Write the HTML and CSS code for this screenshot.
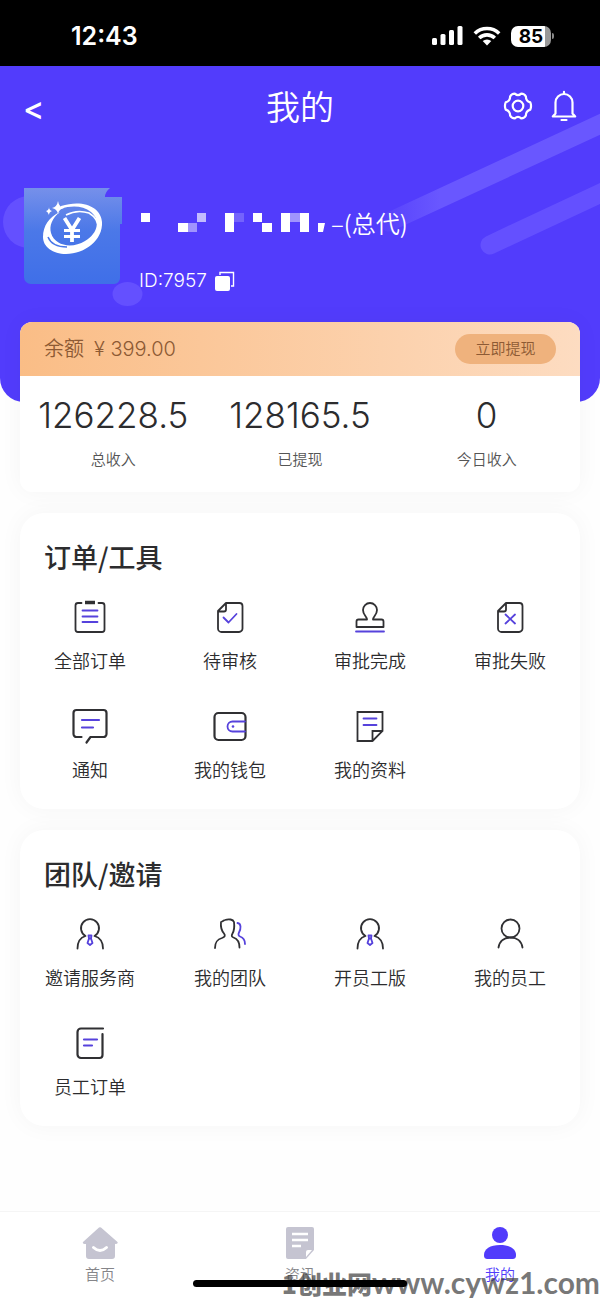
FILE: index.html
```
<!DOCTYPE html>
<html lang="zh-CN">
<head>
<meta charset="utf-8">
<meta name="viewport" content="width=device-width, initial-scale=1">
<title>我的</title>
<link rel="stylesheet" href="styles.css">
</head>
<body>
<div class="app">
  <div class="status">
    <span class="clock">12:43</span>
    <div class="signals">
      <svg width="31" height="20" viewBox="0 0 31 20" fill="#fff"><rect x="0" y="12" width="5" height="7" rx="1.5"/><rect x="8.500" y="8" width="5" height="11" rx="1.500"/><rect x="17" y="4" width="5" height="15" rx="1.500"/><rect x="25.500" y="0" width="5" height="19" rx="1.500"/></svg>
      <svg width="28" height="20" viewBox="0 0 28 20" fill="none" stroke="#fff" stroke-width="3.600"><path d="M1.800 7.500a17.500 17.500 0 0 1 24.400 0"/><path d="M6.200 12a11.300 11.300 0 0 1 15.600 0"/><path d="M14 19.500l-4.300-4.400a6.300 6.300 0 0 1 8.600 0z" fill="#fff" stroke="none"/></svg>
      <div class="battery"><span class="battery-level">85</span><span class="battery-tip"></span></div>
    </div>
  </div>

  <header class="hero">
    <svg class="hero-art" viewBox="0 0 600 336" preserveAspectRatio="xMaxYMin slice" aria-hidden="true">
      <defs><linearGradient id="beam" gradientUnits="userSpaceOnUse" x1="380" y1="0" x2="440" y2="0"><stop stop-color="#5641fc"/><stop offset="1" stop-color="#6957ff"/></linearGradient></defs>
      <g fill="none" stroke-width="19" stroke-linecap="round"><path stroke="url(#beam)" d="M389 156L620 49"/><path stroke="#6450ff" d="M490 179L620 118"/></g>
      <ellipse cx="29" cy="156" rx="26" ry="26" fill="#6450ff"/><ellipse cx="127.500" cy="228" rx="15" ry="12" fill="#6450ff"/>
    </svg>
    <nav class="nav">
      <button class="nav-back" type="button" aria-label="返回">&lt;</button>
      <h1 class="nav-title">我的</h1>
      <div class="nav-actions">
        <button class="icon-button" type="button" aria-label="设置"><svg width="30" height="32" viewBox="0 0 30 32" fill="none" stroke="#fff" stroke-width="2.200" stroke-linejoin="round"><path d="M11.800 3.600Q15 6.600 18.200 3.600Q21.500 3.700 22.900 6.500Q22.800 11 27.300 12.400Q28.800 16 27.300 19.600Q22.800 21 22.900 25.500Q21.500 28.300 18.200 28.400Q15 25.400 11.800 28.400Q8.500 28.300 7.100 25.500Q7.200 21 2.700 19.600Q1.200 16 2.700 12.400Q7.200 11 7.100 6.500Q8.500 3.700 11.800 3.600Z"/><circle cx="15" cy="16" r="5.300"/></svg></button>
        <button class="icon-button" type="button" aria-label="消息"><svg width="26" height="32" viewBox="0 0 26 32" fill="none" stroke="#fff" stroke-width="2.200" stroke-linecap="round" stroke-linejoin="round"><path d="M13 1.800V3.500M4.500 23.500V12.500a8.500 8.500 0 0 1 17 0v11l2.700 3H1.800zM10.500 30h5"/></svg></button>
      </div>
    </nav>
    <div class="profile">
      <svg class="avatar" width="98" height="98" viewBox="0 0 98 98" role="img" aria-label="头像">
        <defs><linearGradient id="sky" x2="0" y2="1"><stop stop-color="#7690ea"/><stop offset=".45" stop-color="#4b78e8"/><stop offset="1" stop-color="#3f6fe8"/></linearGradient></defs>
        <path d="M0 1H86Q81 5 81 10H98V37H96V91a6 6 0 0 1-6 6H7a7 7 0 0 1-7-7z" fill="url(#sky)"/>
        <path fill="#fff" fill-rule="evenodd" d="M37 19C59 12 77 20 78 35C79 53 61 67 42 67C29 67 19 60 19 50C19 39 25 30 36 25C28 31 25 39 27 46C31 59 48 62 61 54C75 46 76 32 67 25C59 19 48 18 37 22z"/>
        <path d="M42 28Q53 22 65 26Q75 32 74 42" fill="none" stroke="#fff" stroke-width="1.500"/>
        <path d="M24 50Q28 60 43 60" fill="none" stroke="#4b78e8" stroke-width="1.500"/>
        <path d="M40.500 31l7.500 12 7.500-12M48 42v13" fill="none" stroke="#fff" stroke-width="3.800"/>
        <path d="M40 43.500h16M40 49.500h16" fill="none" stroke="#fff" stroke-width="2.800"/>
        <path d="M34 14q1 6 6 7-5 1-6 6-1-5-6-6 5-1 6-7zM25 20q0 3 3 4-3 1-3 4-1-3-3-4 3-1 3-4z" fill="#fff"/>
      </svg>
      <div class="profile-text">
        <p class="name">
          <svg width="186" height="20" viewBox="0 0 186 20" fill="#fff" aria-hidden="true"><path d="M2 0h9v9H2zM39 10h10v9H39zM86 0h9v19h-9zM114 0h9v9h-9zM123 10h10v9h-10zM142 0h9v19h-9zM161 0h9v19h-9zM179 10h7l-2 9h-5z"/><path d="M49 10h9v9h-9zM151 0h10v9h-10z" opacity=".45"/><path d="M58 0h9v9h-9z" opacity=".65"/><path d="M95 0h10v9H95z" opacity=".2"/></svg>
          <span>–(总代)</span>
        </p>
        <p class="uid">ID:7957
          <button class="icon-button" type="button" aria-label="复制"><svg width="20" height="20" viewBox="0 0 20 20"><path d="M5 4V1.500H18.500V15H16" fill="none" stroke="#fff" stroke-width="1.400"/><rect x="0" y="5" width="15" height="15" rx="2" fill="#fff"/></svg></button>
        </p>
      </div>
    </div>
  </header>

  <main class="content">
    <section class="card">
      <div class="balance"><p class="balance-text"><span>余额</span><span class="amount">¥ 399.00</span></p><button class="withdraw" type="button">立即提现</button></div>
      <dl class="stats">
        <div class="stat"><dd>126228.5</dd><dt>总收入</dt></div>
        <div class="stat"><dd>128165.5</dd><dt>已提现</dt></div>
        <div class="stat"><dd>0</dd><dt>今日收入</dt></div>
      </dl>
    </section>

    <section class="card panel">
      <h2 class="panel-title">订单/工具</h2>
      <div class="grid">
        <a class="item" href="#"><svg class="icon" viewBox="0 0 40 40"><path d="M11.500 6H8a2.500 2.500 0 0 0-2.500 2.500v24A2.500 2.500 0 0 0 8 35h24a2.500 2.500 0 0 0 2.500-2.500v-24A2.500 2.500 0 0 0 32 6h-3.500"/><path d="M15 5.500h10" stroke-width="3.500" stroke-linecap="butt"/><path class="accent" d="M12.500 13.500h15M12.500 19.500h15M12.500 25h15"/></svg>全部订单</a>
        <a class="item" href="#"><svg class="icon" viewBox="0 0 40 40"><path d="M16 6h13.500a3 3 0 0 1 3 3v22.500a3.500 3.500 0 0 1-3.500 3.500H11.500A3.500 3.500 0 0 1 8 31.500V14zM16 6v6.500a2 2 0 0 1-2 2H8"/><path class="accent" d="M13.500 20.500l5 5 8-8.500"/></svg>待审核</a>
        <a class="item" href="#"><svg class="icon" viewBox="0 0 40 40"><path d="M17 22.500c0-3-4-4.500-4-9.500a7 7 0 0 1 14 0c0 5-4 6.500-4 9.500h8.500a2 2 0 0 1 2 2V30h-27v-5.500a2 2 0 0 1 2-2z"/><path class="accent" d="M6 34.500h28"/></svg>审批完成</a>
        <a class="item" href="#"><svg class="icon" viewBox="0 0 40 40"><path d="M16 6h13.500a3 3 0 0 1 3 3v22.500a3.500 3.500 0 0 1-3.500 3.500H11.500A3.500 3.500 0 0 1 8 31.500V14zM16 6v6.500a2 2 0 0 1-2 2H8"/><path class="accent" d="M15.500 17.500l9.500 9M25 17.500l-9.500 9"/></svg>审批失败</a>
        <a class="item" href="#"><svg class="icon" viewBox="0 0 40 40"><path stroke-width="2.200" d="M11.500 31H6.500a3 3 0 0 1-3-3V7a3 3 0 0 1 3-3h27a3 3 0 0 1 3 3v21a3 3 0 0 1-3 3H20.500l-4 5.500"/><path class="accent" stroke-width="2.200" d="M12 14h17M12 21.500h11"/></svg>通知</a>
        <a class="item" href="#"><svg class="icon" viewBox="0 0 40 40"><rect stroke-width="2.200" x="4.500" y="7" width="31" height="27" rx="4"/><path class="accent" d="M35 15.500H22.500a5 5 0 0 0 0 10H35"/><circle cx="23" cy="20.500" r="1.300" fill="#5642dc" stroke="none"/></svg>我的钱包</a>
        <a class="item" href="#"><svg class="icon" viewBox="0 0 40 40"><path stroke-linejoin="miter" d="M7.500 6H32.500V25L22.500 35h-15zM32.500 25H22.500V35"/><path class="accent" d="M13.500 12.500h13M13.500 19h13"/></svg>我的资料</a>
      </div>
    </section>

    <section class="card panel">
      <h2 class="panel-title">团队/邀请</h2>
      <div class="grid">
        <a class="item" href="#"><svg class="icon" viewBox="0 0 40 40"><path d="M7.500 34.500c0-6.500 3-11 8-12.500a9 9 0 1 1 9 0c5 1.500 8.500 6 8.500 12.500"/><path class="accent" d="M18.500 21.500h3l-.5 3 1.500 4.500-2.500 2-2.500-2 1.500-4.500zM19 24.500h2"/></svg>邀请服务商</a>
        <a class="item" href="#"><svg class="icon" viewBox="0 0 40 40"><path d="M5 34c0-6 2-8.500 7-10 3-1 3.500-2.500 2-4.500-2.500-3-3.500-7-3-11.500 2-.5 2.500-1.500 4-2 4-1.500 8-.5 9 2 .500 4 .500 8-1.500 11.500-1.500 2.500-.5 3.500 1 4 4.500 1.500 6 4.500 6 10"/><path class="accent" d="M27.500 9c4 .5 3.500 6 1.500 9.500-1 2-.5 3.500 1 4 3 1 5 3.500 5 7.500"/></svg>我的团队</a>
        <a class="item" href="#"><svg class="icon" viewBox="0 0 40 40"><path d="M7.500 34.500c0-6.500 3-11 8-12.500a9 9 0 1 1 9 0c5 1.500 8.500 6 8.500 12.500"/><path class="accent" d="M18.500 21.500h3l-.5 3 1.500 4.500-2.500 2-2.500-2 1.500-4.500zM19 24.500h2"/></svg>开员工版</a>
        <a class="item" href="#"><svg class="icon" viewBox="0 0 40 40"><circle cx="20.500" cy="14.500" r="9"/><path d="M8.500 33.500c1-6.500 6-10 12-10s11 3.500 12 10"/></svg>我的员工</a>
        <a class="item" href="#"><svg class="icon" viewBox="0 0 40 40"><path d="M33 5.500H11A3.500 3.500 0 0 0 7.500 9v22.500A3.500 3.500 0 0 0 11 35h18.500a3 3 0 0 0 3-3V11" stroke-width="2.200"/><path class="accent" stroke-width="2.200" d="M14 16.500h13M14 22.500h8"/></svg>员工订单</a>
      </div>
    </section>
  </main>

  <footer class="tabbar">
    <a class="tab" href="#"><svg width="36" height="32" viewBox="0 0 36 32"><path d="M17 .5a2 2 0 0 1 2 0L35.500 15q1 2-2.500 2v12a3 3 0 0 1-3 3H7a3 3 0 0 1-3-3V17q-4 0-3-2z" fill="#c5c4d1"/><path d="M11.500 20.500q6.500 6 13 0" fill="none" stroke="#fff" stroke-width="3" stroke-linecap="round"/></svg>首页</a>
    <a class="tab" href="#"><svg width="36" height="32" viewBox="0 0 36 32"><path d="M6 0h24a2 2 0 0 1 2 2v21l-8 9H6a2 2 0 0 1-2-2V2a2 2 0 0 1 2-2z" fill="#c5c4d1"/><path d="M10 7h16M10 13h16M10 19h9" stroke="#fff" stroke-width="2.500"/><path d="M24 30v-5q0-2 2-2h4z" fill="#fff"/></svg>资讯</a>
    <a class="tab tab-active" href="#" aria-current="page"><svg width="36" height="32" viewBox="0 0 36 32" fill="#513bfb"><circle cx="18" cy="8" r="8"/><path d="M2 28c0-6 6-10 16-10s16 4 16 10c0 3-1 4-4 4H6c-3 0-4-1-4-4z"/></svg>我的</a>
    <div class="watermark"><span class="watermark-name">1创业网</span>www.cywz1.com</div>
    <div class="home-bar"></div>
  </footer>
</div>
</body>
</html>
```
FILE: styles.css
```
* { box-sizing: border-box; }

body {
  margin: 0;
  background: #fefefe;
  color: #2c2c2e;
  font-family: Inter, "Noto Sans CJK SC", sans-serif;
  font-weight: 300;
}

h1, h2, p, dl, dd { margin: 0; }
a { color: inherit; text-decoration: none; }
svg { display: block; flex: none; }

button {
  padding: 0;
  border: 0;
  background: none;
  color: inherit;
  font: inherit;
  cursor: pointer;
}

.app {
  display: flex;
  flex-direction: column;
  min-height: 100vh;
  overflow: hidden;
}

/* Status bar */
.status {
  display: flex;
  align-items: center;
  justify-content: space-between;
  height: 66px;
  padding: 6px 46px 0 71px;
  background: #000;
  color: #fff;
}
.clock { font-size: 25px; font-weight: 600; line-height: 30px; }
.signals { display: flex; align-items: center; gap: 10px; }
.battery { display: flex; align-items: center; gap: 1px; }
.battery-level {
  width: 40px;
  border-radius: 7px;
  background: linear-gradient(90deg, #fff 85%, #999 85%);
  color: #000;
  font-size: 19px;
  font-weight: 700;
  line-height: 21px;
  text-align: center;
}
.battery-tip { width: 2px; height: 6px; border-radius: 0 2px 2px 0; background: #888; }

/* Hero */
.hero {
  position: relative;
  overflow: hidden;
  padding-bottom: 111px;
  border-radius: 0 0 24px 24px;
  background: #523cfc;
  color: #fff;
}
.hero-art { position: absolute; inset: 0; width: 100%; height: 100%; }
.nav {
  position: relative;
  display: grid;
  grid-template-columns: 1fr auto 1fr;
  align-items: center;
  height: 80px;
  padding: 0 23px;
}
.nav-back { justify-self: start; padding-top: 6px; font-size: 32px; font-weight: 500; line-height: 34px; }
.nav-title { padding-top: 4px; font-size: 34px; font-weight: 350; line-height: 40px; }
.nav-actions { display: flex; justify-self: end; align-items: center; gap: 18px; }
.profile { position: relative; display: flex; align-items: flex-start; gap: 17px; padding: 41px 24px 0; }
.profile-text { display: flex; flex-direction: column; gap: 32px; padding-top: 20px; }
.name { display: flex; align-items: center; gap: 6px; font: 350 24px/32px "Noto Sans CJK SC", sans-serif; }
.uid { display: flex; align-items: center; gap: 8px; font-size: 19px; line-height: 20px; }

/* Cards */
.content {
  position: relative;
  display: flex;
  flex-direction: column;
  gap: 21px;
  margin-top: -80px;
  padding: 0 20px 24px;
}
.card { border-radius: 12px; background: #fff; box-shadow: 0 0 24px rgba(0, 0, 0, 0.04); }
.balance {
  display: flex;
  align-items: center;
  justify-content: space-between;
  padding: 12px 24px;
  border-radius: 12px 12px 0 0;
  background: linear-gradient(90deg, #fabd86, #fddcc1);
  color: #8d5a34;
}
.balance-text { display: flex; align-items: center; gap: 10px; font-size: 20px; font-weight: 350; line-height: 30px; }
.amount { font-weight: 300; }
.withdraw { width: 101px; border-radius: 15px; background: #efb27d; font-size: 15px; font-weight: 350; line-height: 30px; }
.stats { display: grid; grid-template-columns: repeat(3, 1fr); padding: 17px 0 21px; text-align: center; }
.stat { display: flex; flex-direction: column; gap: 12px; }
.stat dd { font-size: 35px; line-height: 44px; }
.stat dt { order: 1; color: #555; font-size: 15px; font-weight: 350; line-height: 22px; }

.panel { padding: 26px 0; border-radius: 24px; }
.panel-title { padding: 0 24px; font: 500 27px/36px "Noto Sans CJK SC", sans-serif; }
.grid { display: grid; grid-template-columns: repeat(4, 1fr); row-gap: 32px; margin-top: 22px; }
.item {
  display: flex;
  flex-direction: column;
  align-items: center;
  gap: 13px;
  font-size: 18px;
  font-weight: 350;
  line-height: 24px;
}
.icon {
  width: 40px;
  height: 40px;
  fill: none;
  stroke: #303033;
  stroke-width: 1.8;
  stroke-linecap: round;
  stroke-linejoin: round;
}
.accent { stroke: #5642dc; }

/* Tab bar */
.tabbar {
  position: relative;
  display: grid;
  grid-template-columns: repeat(3, 1fr);
  margin-top: auto;
  padding: 15px 0 12px;
  border-top: 1px solid #f5f5f5;
  background: #fff;
}
.tab { display: flex; flex-direction: column; align-items: center; gap: 5px; color: #858589; font-size: 15px; font-weight: 350; line-height: 22px; }
.tab-active { color: #513bfb; }
.watermark {
  position: absolute;
  right: 0;
  bottom: 0;
  display: flex;
  align-items: baseline;
  color: rgba(60, 60, 60, 0.7);
  font: 700 30px/32px Lato, sans-serif;
  white-space: nowrap;
}
.watermark-name { font: 900 25px/28px "Noto Sans CJK SC", sans-serif; }
.home-bar {
  position: absolute;
  bottom: 11px;
  left: calc(50% - 107px);
  width: 214px;
  height: 7px;
  border-radius: 4px;
  background: #000;
}
```
